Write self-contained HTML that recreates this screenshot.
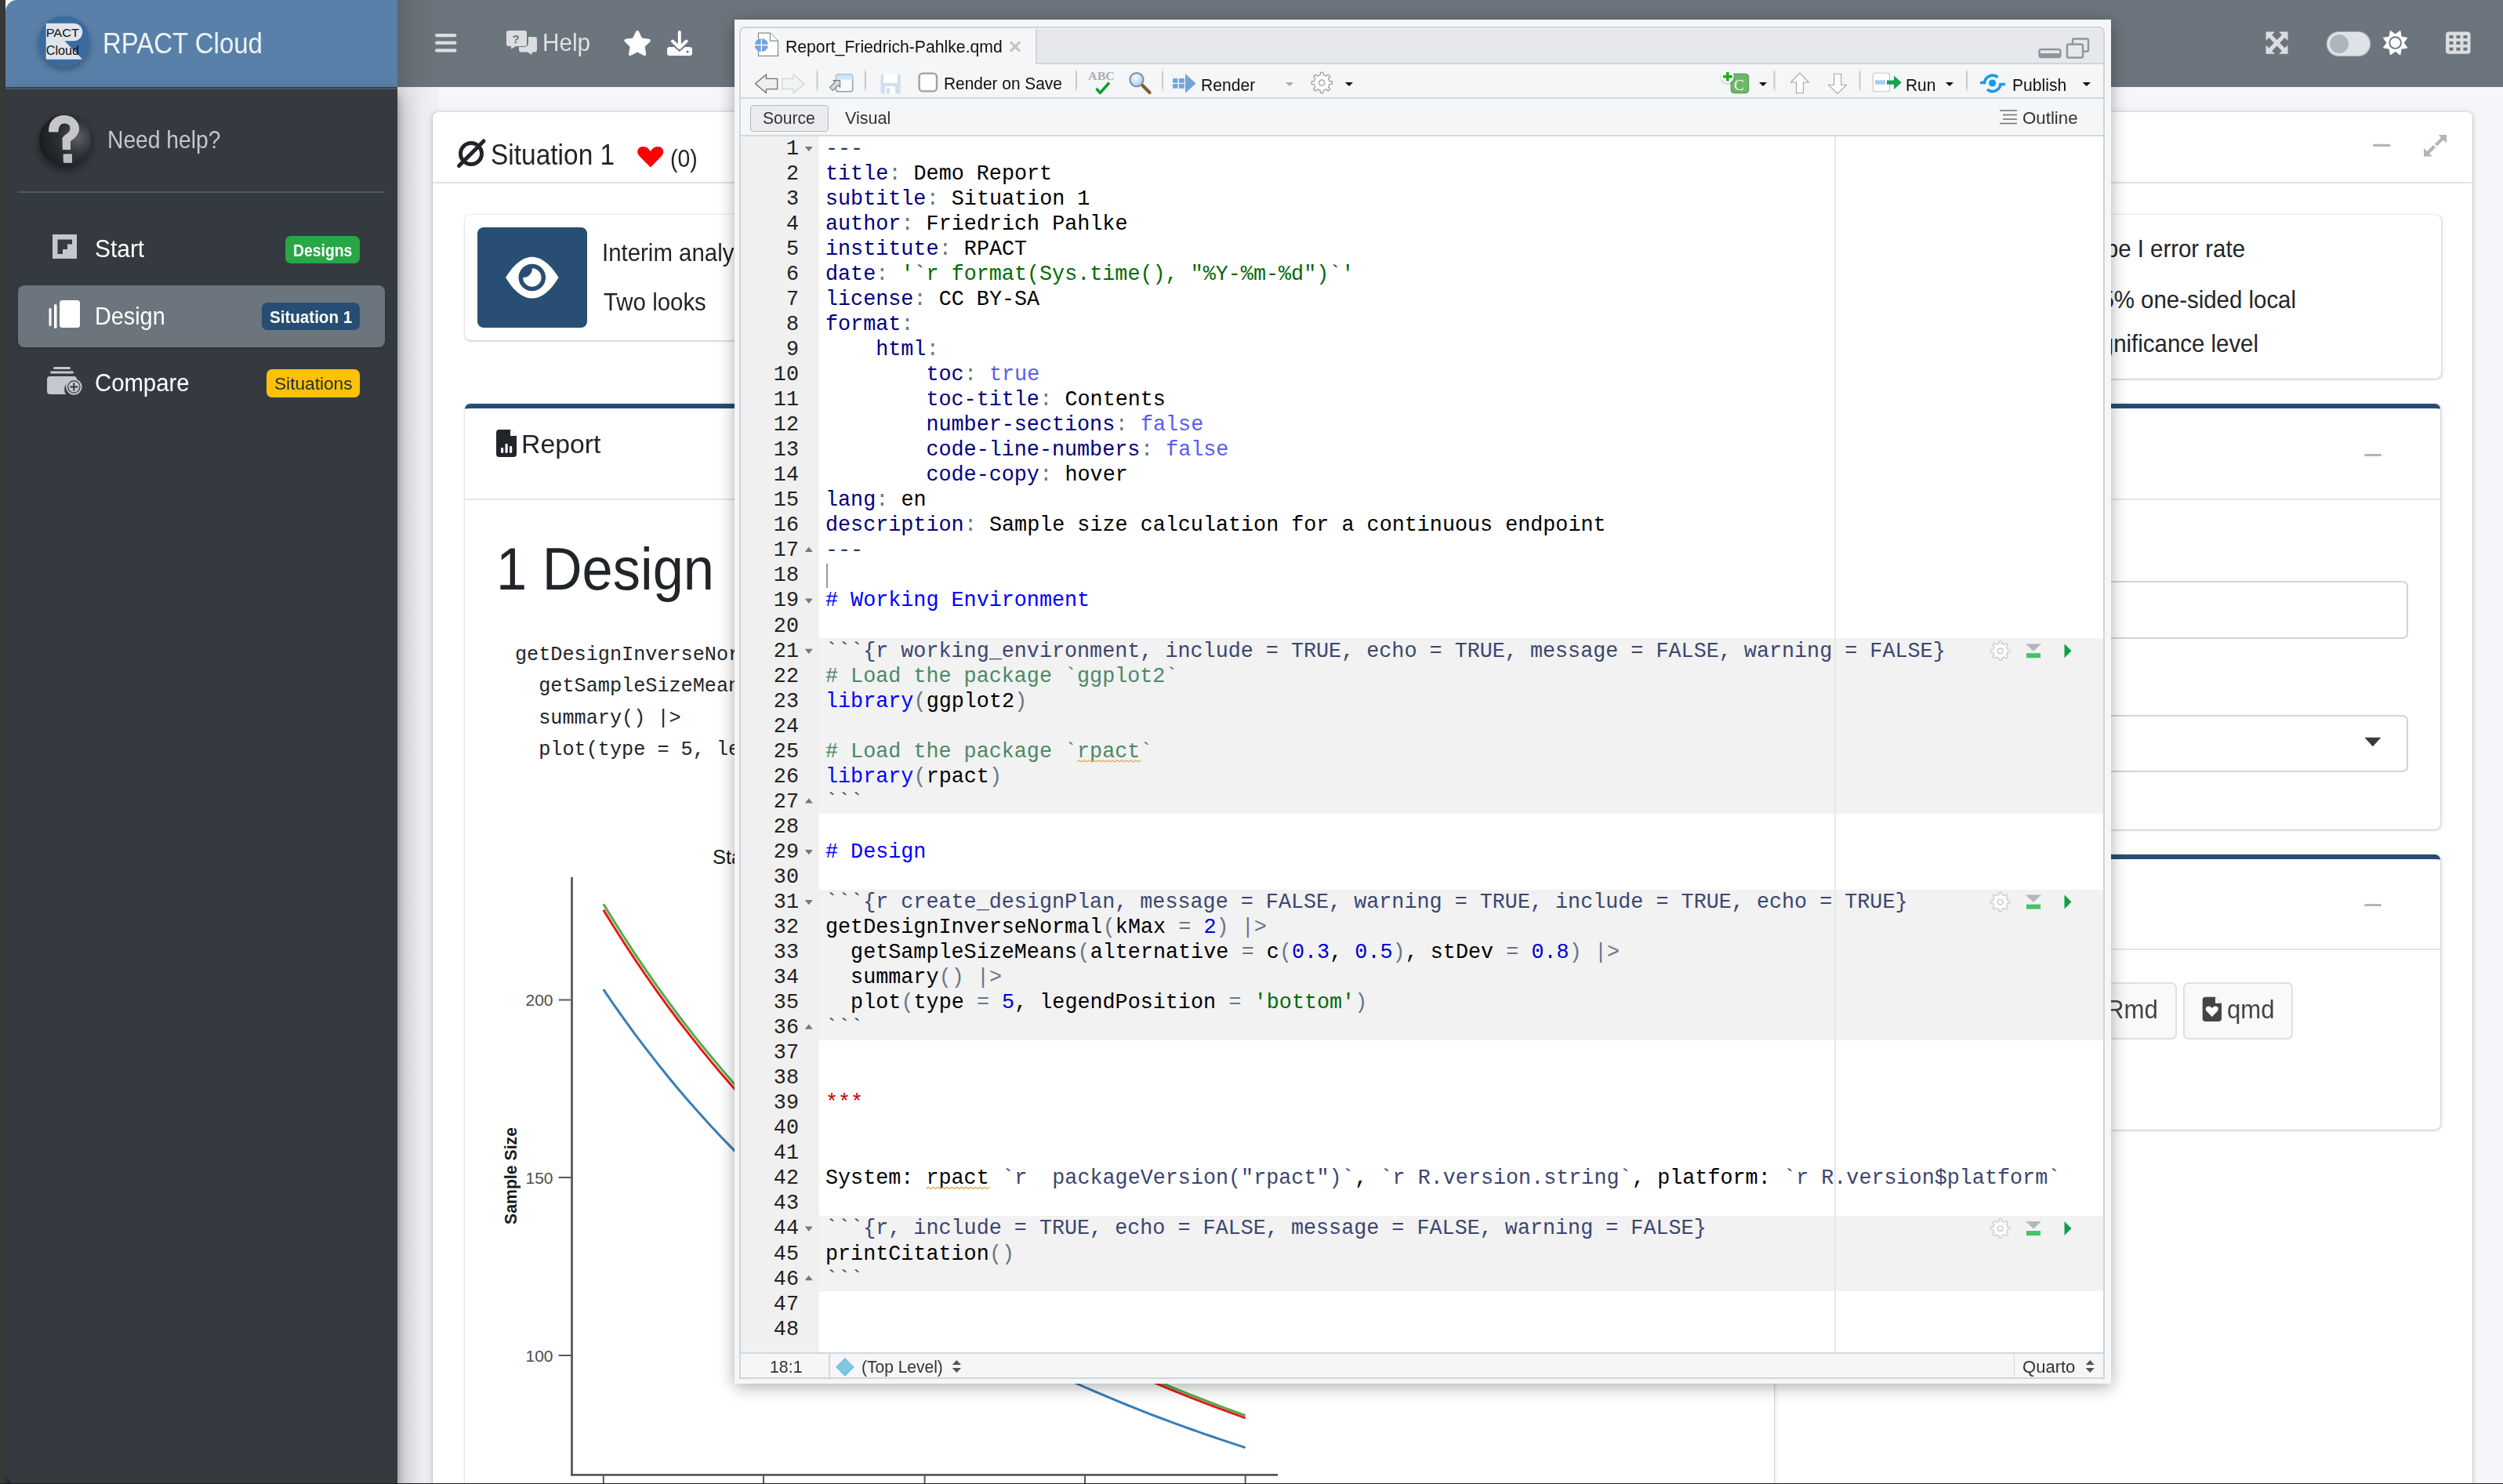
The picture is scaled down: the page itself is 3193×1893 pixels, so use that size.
<!DOCTYPE html><html><head><meta charset="utf-8"><style>
*{box-sizing:border-box;margin:0;padding:0}
html,body{width:3193px;height:1893px;overflow:hidden;background:#f4f6f9;font-family:"Liberation Sans",sans-serif}
.a{position:absolute}
.t{position:absolute;white-space:pre;line-height:1;transform-origin:0 0}
svg{position:absolute;overflow:visible}
</style></head><body>
<div class="a" style="left:0.00px;top:0.00px;width:7.00px;height:1893.00px;background:#383838;z-index:3;"></div>
<div class="a" style="left:0.00px;top:1850.00px;width:60.00px;height:43.00px;background:#383838;z-index:1;"></div>
<div class="a" style="left:7.00px;top:0.00px;width:500.00px;height:111.00px;background:#5880a8;border-top-left-radius:15px;"></div>
<div class="a" style="left:507.00px;top:0.00px;width:2686.00px;height:111.00px;background:#6c757d;"></div>
<div class="a" style="left:507.00px;top:111.00px;width:2686.00px;height:1782.00px;background:#f4f6f9;"></div>
<div class="a" style="left:7.00px;top:111.00px;width:500.00px;height:1782.00px;background:#343a40;border-bottom-left-radius:15px;box-shadow:0 14px 28px rgba(0,0,0,.25),0 10px 10px rgba(0,0,0,.22);z-index:2;"></div>
<div class="a" style="left:507.00px;top:111.00px;width:53.00px;height:1782.00px;background:linear-gradient(90deg,rgba(0,0,0,.13),rgba(0,0,0,.08) 30%,rgba(0,0,0,.035) 70%,rgba(0,0,0,.02));z-index:1;"></div>
<div class="a" style="left:507.00px;top:0.00px;width:53.00px;height:111.00px;background:linear-gradient(90deg,rgba(0,0,0,.13),rgba(0,0,0,.06) 35%,rgba(0,0,0,.0));z-index:1;"></div>
<div class="a" style="left:7.00px;top:111.50px;width:500.00px;height:2.00px;background:#4b545c;z-index:3;"></div>
<div class="a" style="left:0.00px;top:1892.00px;width:3193.00px;height:1.00px;background:#1e1e1e;z-index:30;"></div>
<svg style="left:0;top:0;z-index:3" width="520" height="111">
<defs><filter id="sh" x="-50%" y="-50%" width="200%" height="200%"><feDropShadow dx="0" dy="4" stdDeviation="5" flood-opacity=".35"/></filter></defs>
<circle cx="81.9" cy="52.8" r="32.6" fill="#3a6b9e" filter="url(#sh)"/>
<path d="M58.7 29.8 H94 a11.25 11.25 0 0 1 0 22.5 H82.5 L105.2 75.8 H58.7 Z" fill="#dfe5ed"/>
<text x="58.7" y="46.7" font-family="Liberation Sans" font-size="15.5" fill="#111" textLength="42.3" lengthAdjust="spacingAndGlyphs">PACT</text>
<text x="58.7" y="70.2" font-family="Liberation Sans" font-size="16.5" fill="#111" textLength="42.3" lengthAdjust="spacingAndGlyphs">Cloud</text>
</svg>
<span class="t" style="left:131.00px;top:37.27px;font-size:37.80px;color:rgba(255,255,255,.9);font-family:'Liberation Sans',sans-serif;transform:scaleX(0.8720);z-index:3;">RPACT Cloud</span>
<svg style="left:0;top:111px;z-index:3" width="520" height="420">
<defs><radialGradient id="chalk" cx="75%" cy="45%" r="75%"><stop offset="0" stop-color="#5b5f64"/><stop offset=".45" stop-color="#2e3135"/><stop offset="1" stop-color="#1b1d20"/></radialGradient>
<filter id="sh2" x="-50%" y="-50%" width="200%" height="200%"><feDropShadow dx="0" dy="5" stdDeviation="6" flood-opacity=".45"/></filter></defs>
<circle cx="82.8" cy="68" r="33.2" fill="url(#chalk)" filter="url(#sh2)"/>
<path d="M62.6 57 C62 44 70 36.5 82 36.5 C94 36.5 100.5 45 100.5 53 C100.5 61 95 65 89.5 69 L89.5 79.6 L80.2 79.6 L80 65 C82 61 90 59 90 53 C90 48 86 46 82 46 C77.5 46 74 50 74 57 Z" fill="#c6c6c6" stroke="#d8d8d8" stroke-width=".8"/>
<path d="M81 86 L91.3 85.8 L91.6 96.2 L81.4 96.3 Z" fill="#b9bcbd" stroke="#d8d8d8" stroke-width=".8"/>
<line x1="23" y1="134" x2="491" y2="134" stroke="#4f5962" stroke-width="2"/>
</svg>
<span class="t" style="left:136.50px;top:162.78px;font-size:31.20px;color:#c2c7d0;font-family:'Liberation Sans',sans-serif;transform:scaleX(0.9050);z-index:3;">Need help?</span>
<div class="a" style="left:23.00px;top:364.00px;width:468.00px;height:79.00px;background:#6c757d;border-radius:8px;box-shadow:0 1px 3px rgba(0,0,0,.2);z-index:3;"></div>
<span class="t" style="left:120.80px;top:302.25px;font-size:31.00px;color:#fff;font-family:'Liberation Sans',sans-serif;transform:scaleX(0.9650);z-index:4;">Start</span>
<span class="t" style="left:120.50px;top:387.85px;font-size:31.00px;color:#fff;font-family:'Liberation Sans',sans-serif;transform:scaleX(0.9290);z-index:4;">Design</span>
<span class="t" style="left:120.80px;top:472.95px;font-size:31.00px;color:#fff;font-family:'Liberation Sans',sans-serif;transform:scaleX(0.9450);z-index:4;">Compare</span>
<div class="a" style="left:364.00px;top:301.00px;width:95.00px;height:35.00px;background:#28a745;border-radius:7px;z-index:4;"></div>
<span class="t" style="left:373.50px;top:308.60px;font-size:22.00px;color:#fff;font-family:'Liberation Sans',sans-serif;font-weight:700;transform:scaleX(0.8800);z-index:5;">Designs</span>
<div class="a" style="left:334.00px;top:386.00px;width:125.00px;height:35.00px;background:#264d73;border-radius:7px;z-index:4;"></div>
<span class="t" style="left:344.00px;top:393.60px;font-size:22.00px;color:#fff;font-family:'Liberation Sans',sans-serif;font-weight:700;transform:scaleX(0.9350);z-index:5;">Situation 1</span>
<div class="a" style="left:340.00px;top:471.00px;width:119.00px;height:36.00px;background:#ffc107;border-radius:7px;z-index:4;"></div>
<span class="t" style="left:349.50px;top:479.30px;font-size:22.00px;color:#1f2d3d;font-family:'Liberation Sans',sans-serif;transform:scaleX(1.0300);z-index:5;">Situations</span>
<svg style="left:0;top:0;z-index:5" width="520" height="560">
<path d="M67 299 H98 V330 H67 Z M73.5 305.5 V324 H80 V318 H86 V311.5 H92 V305.5 Z" fill="#c2c7d0" fill-rule="evenodd"/>
<rect x="62.5" y="393" width="3" height="23" rx="1.5" fill="#fff"/>
<rect x="69" y="388" width="3.5" height="31" rx="1.7" fill="#fff"/>
<rect x="76" y="383" width="26" height="35" rx="3.5" fill="#fff"/>
<rect x="68" y="468" width="22" height="3" rx="1.5" fill="#c2c7d0"/>
<rect x="64" y="473.5" width="30" height="3" rx="1.5" fill="#c2c7d0"/>
<path d="M60 484 a4 4 0 0 1 4 -4 H94 a4 4 0 0 1 4 4 V487 A11 11 0 0 0 84 503 H64 a4 4 0 0 1 -4 -4 Z" fill="#c2c7d0"/>
<circle cx="94.3" cy="493.5" r="10.3" fill="#c2c7d0"/>
<circle cx="94.3" cy="493.5" r="8.3" fill="#343a40"/>
<circle cx="94.3" cy="493.5" r="7" fill="#c2c7d0"/>
<path d="M94.3 488.5 V498.5 M89.3 493.5 H99.3" stroke="#343a40" stroke-width="2"/>
</svg>
<svg style="left:0;top:0;z-index:3" width="3193" height="111">
<rect x="555" y="43" width="27.5" height="4.2" rx="2.1" fill="#dcdde0"/>
<rect x="555" y="52.6" width="27.5" height="4.2" rx="2.1" fill="#dcdde0"/>
<rect x="555" y="62.3" width="27.5" height="4.2" rx="2.1" fill="#dcdde0"/>
<path d="M649 39 H669 a3 3 0 0 1 3 3 V56 a3 3 0 0 1 -3 3 H658 L652 62.5 V59 H649 a3 3 0 0 1 -3 -3 V42 a3 3 0 0 1 3 -3 Z" fill="#dcdde0"/>
<path d="M674 47 H682 a3 3 0 0 1 3 3 V63.5 a3 3 0 0 1 -3 3 H678.5 V70 L673 66.5 H665 a3 3 0 0 1 -3 -3 V60 H669 a5 5 0 0 0 5 -5 Z" fill="#dcdde0"/>
<text x="653.5" y="55" font-family="Liberation Sans" font-weight="700" font-size="15" fill="#6c757d">?</text>
<path transform="translate(795.1,39) scale(0.0625)" d="M259.3 17.8L194 150.2 47.9 171.5c-26.2 3.8-36.7 36.1-17.7 54.6l105.7 103-25 145.5c-4.5 26.3 23.2 46 46.4 33.7L288 439.6l130.7 68.7c23.2 12.2 50.9-7.4 46.4-33.7l-25-145.5 105.7-103c19-18.5 8.5-50.8-17.7-54.6L382 150.2 316.7 17.8c-11.7-23.6-45.6-23.9-57.4 0z" fill="#fff"/>
<path d="M866.8 41 V60" stroke="#fff" stroke-width="4" stroke-linecap="round"/>
<path d="M858 52.5 L866.8 61 L875.6 52.5" stroke="#fff" stroke-width="4" fill="none" stroke-linecap="round" stroke-linejoin="round"/>
<path d="M851 63 a3 3 0 0 1 3 -3 H860 L866.8 66 L873.6 60 H880 a3 3 0 0 1 3 3 V68 a3 3 0 0 1 -3 3 H854 a3 3 0 0 1 -3 -3 Z" fill="#fff"/>
<circle cx="877" cy="66" r="1.6" fill="#6c757d"/>
<path d="M2890.6 40.6 H2902 L2898.2 44.6 L2904.6 51 L2911 44.6 L2907.1 40.6 H2918.5 V52 L2914.6 48.1 L2908.2 54.7 L2914.6 61.2 L2918.5 57.4 V68.8 H2907.1 L2911 65 L2904.6 58.4 L2898.2 65 L2902 68.8 H2890.6 V57.4 L2894.5 61.2 L2900.9 54.7 L2894.5 48.1 L2890.6 52 Z" fill="#dcdde0"/>
<rect x="2968.2" y="40.5" width="55.5" height="31" rx="15.5" fill="#dfe2e6" stroke="#a9b1b9" stroke-width="1.2"/>
<circle cx="2984" cy="56" r="12" fill="#adb5bd"/>
<polygon points="3055.60,43.80 3061.95,39.26 3063.24,46.96 3070.94,48.25 3066.40,54.60 3070.94,60.95 3063.24,62.24 3061.95,69.94 3055.60,65.40 3049.25,69.94 3047.96,62.24 3040.26,60.95 3044.80,54.60 3040.26,48.25 3047.96,46.96 3049.25,39.26" fill="#fff" stroke="#fff" stroke-width="0.8" stroke-linejoin="round"/>
<circle cx="3055.6" cy="54.6" r="7.3" fill="#fff" stroke="#6c757d" stroke-width="1.9"/>
<rect x="3120" y="40.6" width="31.5" height="28.2" rx="4" fill="#dcdde0"/>
<g fill="#6c757d">
<rect x="3124.5" y="45" width="5" height="4"/><rect x="3133.5" y="45" width="5" height="4"/><rect x="3142.5" y="45" width="5" height="4"/>
<rect x="3124.5" y="52.8" width="5" height="4"/><rect x="3133.5" y="52.8" width="5" height="4"/><rect x="3142.5" y="52.8" width="5" height="4"/>
<rect x="3124.5" y="60.6" width="5" height="4"/><rect x="3133.5" y="60.6" width="5" height="4"/><rect x="3142.5" y="60.6" width="5" height="4"/>
</g>
</svg>
<span class="t" style="left:692.30px;top:39.39px;font-size:31.30px;color:#dfe0e2;font-family:'Liberation Sans',sans-serif;transform:scaleX(0.9500);z-index:3;">Help</span>
<div class="a" style="left:552px;top:143px;width:2602px;height:1800px;background:#fff;border-radius:7px;box-shadow:0 0 1px rgba(0,0,0,.2),0 1px 3px rgba(0,0,0,.2),0 0 8px rgba(0,0,0,.14);z-index:1"></div>
<div class="a" style="left:552.00px;top:232.00px;width:2602.00px;height:2.00px;background:#dee2e6;z-index:1;"></div>
<span class="t" style="left:626.00px;top:179.73px;font-size:36.20px;color:#212529;font-family:'Liberation Sans',sans-serif;transform:scaleX(0.9250);z-index:3;">Situation 1</span>
<span class="t" style="left:854.50px;top:186.57px;font-size:30.50px;color:#212529;font-family:'Liberation Sans',sans-serif;transform:scaleX(0.9300);z-index:3;">(0)</span>
<svg style="left:0;top:0;z-index:3" width="3193" height="300">
<circle cx="601" cy="196" r="13.5" fill="none" stroke="#212529" stroke-width="5"/>
<path d="M585.5 211.5 L617 180" stroke="#212529" stroke-width="5" stroke-linecap="round"/>
<path d="M829.8 213.6 L816 199.6 C811 194.5 813 187 820.5 187 C825 187 828 190 829.8 193 C831.6 190 834.6 187 839 187 C846.5 187 848.6 194.5 843.6 199.6 Z" fill="#f00"/>
<rect x="3027" y="183.7" width="22.5" height="3.4" rx="1.7" fill="#adb5bd"/>
<path d="M3092 199.5 V189 L3096 193 L3104 185 L3107 188 L3099 196 L3103 199.5 Z M3121 172 V182.5 L3117 178.5 L3109 186.5 L3106 183.5 L3114 175.5 L3110.5 172 Z" fill="#adb5bd"/>
</svg>
<div class="a" style="left:593px;top:274px;width:1245px;height:160px;background:#fff;border-radius:7px;box-shadow:0 0 1px rgba(0,0,0,.2),0 1px 3px rgba(0,0,0,.2),3px 0 5px rgba(0,0,0,.07);z-index:2"></div>
<div class="a" style="left:609.00px;top:290.00px;width:140.00px;height:128.00px;background:#294e73;border-radius:8px;z-index:3;"></div>
<svg style="left:0;top:0;z-index:4" width="1000" height="500">
<path d="M645 354 C658 333 670 327.7 678.8 327.7 C687.6 327.7 699.6 333 712.6 354 C699.6 375.5 687.6 380.5 678.8 380.5 C670 380.5 658 375.5 645 354 Z" fill="#fff"/>
<circle cx="678.8" cy="354" r="14.5" fill="none" stroke="#294e73" stroke-width="5.5"/>
<path d="M665 354 A13.8 13.8 0 0 1 678.8 340.2 V342.2 A11.2 11.2 0 0 1 667.0 354 Z" fill="#294e73"/>
</svg>
<span class="t" style="left:768.00px;top:306.59px;font-size:31.30px;color:#212529;font-family:'Liberation Sans',sans-serif;transform:scaleX(0.9400);z-index:3;">Interim analysis</span>
<span class="t" style="left:769.50px;top:370.09px;font-size:31.30px;color:#212529;font-family:'Liberation Sans',sans-serif;transform:scaleX(0.9400);z-index:3;">Two looks</span>
<div class="a" style="left:1868px;top:274px;width:1245.5px;height:209px;background:#fff;border-radius:7px;box-shadow:0 0 1px rgba(0,0,0,.2),0 1px 3px rgba(0,0,0,.2),3px 0 5px rgba(0,0,0,.07);z-index:2"></div>
<span class="t" style="left:2864.00px;top:302.00px;font-size:31.30px;color:#212529;font-family:'Liberation Sans',sans-serif;transform:scaleX(0.9400);z-index:3;transform-origin:100% 0;translate:-100% 0;">Type I error rate</span>
<span class="t" style="left:2929.00px;top:367.09px;font-size:31.30px;color:#212529;font-family:'Liberation Sans',sans-serif;transform:scaleX(0.9400);z-index:3;transform-origin:100% 0;translate:-100% 0;">2.5% one-sided local</span>
<span class="t" style="left:2881.00px;top:423.39px;font-size:31.30px;color:#212529;font-family:'Liberation Sans',sans-serif;transform:scaleX(0.9400);z-index:3;transform-origin:100% 0;translate:-100% 0;">significance level</span>
<div class="a" style="left:593px;top:515px;width:1670px;height:1500px;background:#fff;border-radius:7px;border-top:6px solid #264d75;box-shadow:0 0 1px rgba(0,0,0,.2),0 1px 3px rgba(0,0,0,.2),3px 0 5px rgba(0,0,0,.07);z-index:2"></div>
<div class="a" style="left:593.00px;top:636.00px;width:1670.00px;height:2.00px;background:#e2e5e8;z-index:3;"></div>
<span class="t" style="left:664.50px;top:549.70px;font-size:33.30px;color:#212529;font-family:'Liberation Sans',sans-serif;transform:scaleX(1.0150);z-index:3;">Report</span>
<svg style="left:0;top:0;z-index:4" width="1000" height="700">
<path d="M636 548 H651 L659 556 V579 a4 4 0 0 1 -4 4 H637 a4 4 0 0 1 -4 -4 V552 a4 4 0 0 1 4 -4 Z" fill="#212529"/>
<path d="M651 548 V556 H659 Z" fill="#fff"/>
<rect x="639" y="571" width="3.2" height="7" rx="1.4" fill="#fff"/>
<rect x="644.5" y="566" width="3.2" height="12" rx="1.4" fill="#fff"/>
<rect x="650" y="569" width="3.2" height="9" rx="1.4" fill="#fff"/>
</svg>
<span class="t" style="left:632.50px;top:688.53px;font-size:75.50px;color:#212529;font-family:'Liberation Sans',sans-serif;transform:scaleX(0.9330);z-index:3;">1 Design</span>
<span class="t" style="left:657.00px;top:822.85px;font-size:25.20px;color:#212529;font-family:'Liberation Mono',monospace;z-index:3;">getDesignInverseNormal(kMax = 2) |&gt;</span>
<span class="t" style="left:657.00px;top:863.25px;font-size:25.20px;color:#212529;font-family:'Liberation Mono',monospace;z-index:3;">  getSampleSizeMeans(alternative = c(0.3, 0.5), stDev = 0.8) |&gt;</span>
<span class="t" style="left:657.00px;top:903.65px;font-size:25.20px;color:#212529;font-family:'Liberation Mono',monospace;z-index:3;">  summary() |&gt;</span>
<span class="t" style="left:657.00px;top:944.05px;font-size:25.20px;color:#212529;font-family:'Liberation Mono',monospace;z-index:3;">  plot(type = 5, legendPosition = &#x27;bottom&#x27;)</span>
<svg style="left:0;top:0;z-index:3" width="2300" height="1893">
<line x1="729.5" y1="1119" x2="729.5" y2="1882.5" stroke="#595959" stroke-width="2.8"/>
<line x1="728.1" y1="1881.3" x2="1630" y2="1881.3" stroke="#595959" stroke-width="2.8"/>
<g stroke="#595959" stroke-width="2">
<line x1="712.6" y1="1275.5" x2="729.5" y2="1275.5"/>
<line x1="712.6" y1="1502" x2="729.5" y2="1502"/>
<line x1="712.6" y1="1729" x2="729.5" y2="1729"/>
<line x1="769.8" y1="1881" x2="769.8" y2="1893"/>
<line x1="974" y1="1881" x2="974" y2="1893"/>
<line x1="1179.6" y1="1881" x2="1179.6" y2="1893"/>
<line x1="1384" y1="1881" x2="1384" y2="1893"/>
<line x1="1588.7" y1="1881" x2="1588.7" y2="1893"/>
</g>
<g font-family="Liberation Sans" font-size="21" fill="#4d4d4d" text-anchor="end">
<text x="705.5" y="1283">200</text><text x="705.5" y="1509.5">150</text><text x="705.5" y="1736.5">100</text>
</g>
<text transform="translate(659,1500) rotate(-90)" font-family="Liberation Sans" font-weight="700" font-size="22" fill="#1a1a1a" text-anchor="middle" textLength="124" lengthAdjust="spacingAndGlyphs">Sample Size</text>
<text x="909" y="1102" font-family="Liberation Sans" font-size="25.5" fill="#1a1a1a">Stage levels</text>

<polyline points="769.8,1153.2 783.4,1175.4 797.1,1197.0 810.7,1217.9 824.4,1238.1 838.0,1257.6 851.7,1276.6 865.3,1295.0 879.0,1312.8 892.6,1330.1 906.3,1346.8 919.9,1363.1 933.6,1378.9 947.2,1394.2 960.9,1409.1 974.5,1423.6 988.2,1437.7 1001.8,1451.4 1015.5,1464.6 1029.1,1477.6 1042.8,1490.2 1056.4,1502.4 1070.1,1514.3 1083.7,1525.9 1097.4,1537.2 1111.0,1548.2 1124.7,1558.9 1138.3,1569.4 1152.0,1579.6 1165.6,1589.5 1179.2,1599.2 1192.9,1608.6 1206.5,1617.8 1220.2,1626.8 1233.8,1635.6 1247.5,1644.1 1261.1,1652.5 1274.8,1660.6 1288.4,1668.6 1302.1,1676.4 1315.7,1684.0 1329.4,1691.4 1343.0,1698.7 1356.7,1705.8 1370.3,1712.7 1384.0,1719.5 1397.6,1726.1 1411.3,1732.6 1424.9,1739.0 1438.6,1745.2 1452.2,1751.3 1465.9,1757.2 1479.5,1763.1 1493.2,1768.8 1506.8,1774.4 1520.5,1779.8 1534.1,1785.2 1547.8,1790.5 1561.4,1795.6 1575.1,1800.6 1588.7,1805.6" fill="none" stroke="#4daf4a" stroke-width="3"/>
<polyline points="769.8,1160.6 783.4,1182.8 797.1,1204.2 810.7,1224.9 824.4,1245.0 838.0,1264.4 851.7,1283.3 865.3,1301.5 879.0,1319.2 892.6,1336.4 906.3,1353.1 919.9,1369.2 933.6,1384.9 947.2,1400.2 960.9,1415.0 974.5,1429.3 988.2,1443.3 1001.8,1456.9 1015.5,1470.1 1029.1,1482.9 1042.8,1495.4 1056.4,1507.6 1070.1,1519.4 1083.7,1531.0 1097.4,1542.2 1111.0,1553.1 1124.7,1563.8 1138.3,1574.2 1152.0,1584.3 1165.6,1594.1 1179.2,1603.7 1192.9,1613.1 1206.5,1622.3 1220.2,1631.2 1233.8,1639.9 1247.5,1648.4 1261.1,1656.7 1274.8,1664.8 1288.4,1672.7 1302.1,1680.5 1315.7,1688.0 1329.4,1695.4 1343.0,1702.6 1356.7,1709.7 1370.3,1716.6 1384.0,1723.3 1397.6,1729.9 1411.3,1736.4 1424.9,1742.7 1438.6,1748.9 1452.2,1754.9 1465.9,1760.8 1479.5,1766.6 1493.2,1772.3 1506.8,1777.8 1520.5,1783.3 1534.1,1788.6 1547.8,1793.8 1561.4,1798.9 1575.1,1803.9 1588.7,1808.9" fill="none" stroke="#e41a1c" stroke-width="3"/>
<polyline points="769.8,1262.2 783.4,1282.1 797.1,1301.4 810.7,1320.1 824.4,1338.2 838.0,1355.7 851.7,1372.7 865.3,1389.2 879.0,1405.2 892.6,1420.6 906.3,1435.7 919.9,1450.2 933.6,1464.4 947.2,1478.1 960.9,1491.5 974.5,1504.4 988.2,1517.0 1001.8,1529.3 1015.5,1541.2 1029.1,1552.8 1042.8,1564.0 1056.4,1575.0 1070.1,1585.7 1083.7,1596.0 1097.4,1606.2 1111.0,1616.0 1124.7,1625.6 1138.3,1635.0 1152.0,1644.1 1165.6,1653.0 1179.2,1661.7 1192.9,1670.1 1206.5,1678.4 1220.2,1686.4 1233.8,1694.3 1247.5,1701.9 1261.1,1709.4 1274.8,1716.7 1288.4,1723.9 1302.1,1730.8 1315.7,1737.6 1329.4,1744.3 1343.0,1750.8 1356.7,1757.2 1370.3,1763.4 1384.0,1769.5 1397.6,1775.4 1411.3,1781.2 1424.9,1786.9 1438.6,1792.5 1452.2,1797.9 1465.9,1803.3 1479.5,1808.5 1493.2,1813.6 1506.8,1818.6 1520.5,1823.5 1534.1,1828.3 1547.8,1833.0 1561.4,1837.6 1575.1,1842.1 1588.7,1846.6" fill="none" stroke="#377eb8" stroke-width="3"/>
</svg>
<div class="a" style="left:2293px;top:515px;width:820px;height:543px;background:#fff;border-radius:7px;border-top:6px solid #264d75;box-shadow:0 0 1px rgba(0,0,0,.2),0 1px 3px rgba(0,0,0,.2),3px 0 5px rgba(0,0,0,.07);z-index:2"></div>
<div class="a" style="left:2293.00px;top:636.00px;width:820.00px;height:2.00px;background:#e2e5e8;z-index:3;"></div>
<div class="a" style="left:3015.70px;top:579.00px;width:22.30px;height:3.40px;background:#adb5bd;border-radius:2px;z-index:3;"></div>
<div class="a" style="left:2330.00px;top:741.00px;width:742.40px;height:74.30px;border:2px solid #ced4da;border-radius:7px;z-index:3;"></div>
<div class="a" style="left:2330.00px;top:911.70px;width:742.40px;height:73.60px;border:2px solid #ced4da;border-radius:7px;z-index:3;"></div>
<svg style="left:0;top:0;z-index:4" width="3193" height="1000">
<path d="M3016.4 940.8 H3037.4 L3026.9 952.3 Z" fill="#343a40"/>
</svg>
<div class="a" style="left:2293px;top:1090px;width:820px;height:351px;background:#fff;border-radius:7px;border-top:6px solid #264d75;box-shadow:0 0 1px rgba(0,0,0,.2),0 1px 3px rgba(0,0,0,.2),3px 0 5px rgba(0,0,0,.07);z-index:2"></div>
<div class="a" style="left:2293.00px;top:1210.00px;width:820.00px;height:2.00px;background:#e2e5e8;z-index:3;"></div>
<div class="a" style="left:3016.00px;top:1153.00px;width:21.70px;height:3.40px;background:#adb5bd;border-radius:2px;z-index:3;"></div>
<div class="a" style="left:2640.00px;top:1252.60px;width:137.00px;height:73.40px;background:#f8f9fa;border:2px solid #dddfe2;border-radius:7px;z-index:3;"></div>
<div class="a" style="left:2785.00px;top:1252.60px;width:140.00px;height:73.40px;background:#f8f9fa;border:2px solid #dddfe2;border-radius:7px;z-index:3;"></div>
<span class="t" style="left:2687.00px;top:1271.33px;font-size:33.50px;color:#444;font-family:'Liberation Sans',sans-serif;transform:scaleX(0.9300);z-index:4;">Rmd</span>
<span class="t" style="left:2841.00px;top:1271.33px;font-size:33.50px;color:#444;font-family:'Liberation Sans',sans-serif;transform:scaleX(0.9300);z-index:4;">qmd</span>
<svg style="left:0;top:0;z-index:4" width="3193" height="1400">
<path d="M2813 1271.8 H2826 L2834 1279.8 V1299 a4 4 0 0 1 -4 4 H2813.7 a4 4 0 0 1 -4 -4 V1275.8 a4 4 0 0 1 4 -4 Z" fill="#444"/>
<path d="M2826 1271.8 V1279.8 H2834 Z" fill="#fff"/>
<path d="M2821.8 1297 L2815 1290 C2812.5 1287.3 2814 1283.5 2817.6 1283.5 C2819.6 1283.5 2821 1285 2821.8 1286.2 C2822.6 1285 2824 1283.5 2826 1283.5 C2829.6 1283.5 2831 1287.3 2828.6 1290 Z" fill="#fff"/>
</svg>
<div class="a" style="left:937.00px;top:25.00px;width:1756.00px;height:1740.00px;background:#f4f6f7;box-shadow:0 4px 20px rgba(0,0,0,.33);z-index:10;"></div>
<div class="a" style="left:943.30px;top:34.30px;width:1741.40px;height:1724.70px;border:2.2px solid #d0d5d9;border-radius:7px 7px 0 0;z-index:10;"></div>
<div class="a" style="left:1321.00px;top:36.50px;width:1361.50px;height:45.50px;background:#e6e8eb;border-left:2px solid #d0d5d9;border-bottom:2px solid #d0d5d9;border-top-right-radius:6px;z-index:10;"></div>
<div class="a" style="left:945.00px;top:123.80px;width:1738.00px;height:2.20px;background:#d3d8dc;z-index:10;"></div>
<div class="a" style="left:945.00px;top:171.60px;width:1738.00px;height:2.00px;background:#d3d8dc;z-index:10;"></div>
<div class="a" style="left:957.00px;top:134.00px;width:100.00px;height:34.00px;background:#e9ebee;border:1.6px solid #b4babf;border-radius:4px;z-index:10;"></div>
<div class="a" style="left:945.00px;top:173.60px;width:1738.00px;height:1552.00px;background:#fff;z-index:10;"></div>
<div class="a" style="left:945.00px;top:173.60px;width:100.00px;height:1552.00px;background:#f0f0f0;z-index:10;"></div>
<div class="a" style="left:2340.00px;top:173.60px;width:2.00px;height:1552.00px;background:#e8e8e8;z-index:11;"></div>
<div class="a" style="left:945.00px;top:1724.60px;width:1738.00px;height:2.00px;background:#d3d8dc;z-index:10;"></div>
<div class="a" style="left:1057.00px;top:1726.60px;width:1.60px;height:31.40px;background:#d3d8dc;z-index:10;"></div>
<div class="a" style="left:2568.50px;top:1726.60px;width:1.50px;height:31.40px;background:#d3d8dc;z-index:10;"></div>
<span class="t" style="left:1002.00px;top:49.13px;font-size:22.20px;color:#111;font-family:'Liberation Sans',sans-serif;transform:scaleX(0.9550);z-index:12;">Report_Friedrich-Pahlke.qmd</span>
<span class="t" style="left:1204.00px;top:96.22px;font-size:22.10px;color:#111;font-family:'Liberation Sans',sans-serif;transform:scaleX(0.9450);z-index:12;">Render on Save</span>
<span class="t" style="left:1532.00px;top:98.22px;font-size:22.10px;color:#111;font-family:'Liberation Sans',sans-serif;transform:scaleX(0.9550);z-index:12;">Render</span>
<span class="t" style="left:2431.00px;top:98.22px;font-size:22.10px;color:#111;font-family:'Liberation Sans',sans-serif;transform:scaleX(0.9450);z-index:12;">Run</span>
<span class="t" style="left:2567.00px;top:98.22px;font-size:22.10px;color:#111;font-family:'Liberation Sans',sans-serif;transform:scaleX(0.9550);z-index:12;">Publish</span>
<span class="t" style="left:973.00px;top:140.22px;font-size:22.10px;color:#333;font-family:'Liberation Sans',sans-serif;transform:scaleX(0.9550);z-index:12;">Source</span>
<span class="t" style="left:1077.60px;top:140.22px;font-size:22.10px;color:#333;font-family:'Liberation Sans',sans-serif;transform:scaleX(0.9760);z-index:12;">Visual</span>
<span class="t" style="left:2579.50px;top:139.81px;font-size:22.10px;color:#333;font-family:'Liberation Sans',sans-serif;transform:scaleX(1.0080);z-index:12;">Outline</span>
<span class="t" style="left:981.50px;top:1733.21px;font-size:22.10px;color:#333;font-family:'Liberation Sans',sans-serif;transform:scaleX(0.9650);z-index:12;">18:1</span>
<span class="t" style="left:1098.80px;top:1733.21px;font-size:22.10px;color:#333;font-family:'Liberation Sans',sans-serif;transform:scaleX(0.9500);z-index:12;">(Top Level)</span>
<span class="t" style="left:2580.00px;top:1733.21px;font-size:22.10px;color:#333;font-family:'Liberation Sans',sans-serif;transform:scaleX(0.9970);z-index:12;">Quarto</span>
<div class="a" style="left:1045.00px;top:814.20px;width:1638.00px;height:224.28px;background:#f2f2f2;z-index:10;"></div>
<div class="a" style="left:1045.00px;top:1134.60px;width:1638.00px;height:192.24px;background:#f2f2f2;z-index:10;"></div>
<div class="a" style="left:1045.00px;top:1551.12px;width:1638.00px;height:96.12px;background:#f2f2f2;z-index:10;"></div>
<div class="a" style="left:0;top:0;z-index:12">
<span class="t" style="left:1002.92px;top:176.77px;font-size:26.75px;color:#222;font-family:'Liberation Mono',monospace;">1</span>
<span class="t" style="left:1053.00px;top:176.77px;font-size:26.75px;color:#27365e;font-family:'Liberation Mono',monospace;">---</span>
<span class="t" style="left:1002.92px;top:208.81px;font-size:26.75px;color:#222;font-family:'Liberation Mono',monospace;">2</span>
<span class="t" style="left:1053.00px;top:208.81px;font-size:26.75px;color:#000080;font-family:'Liberation Mono',monospace;">title</span>
<span class="t" style="left:1133.40px;top:208.81px;font-size:26.75px;color:#687687;font-family:'Liberation Mono',monospace;">:</span>
<span class="t" style="left:1149.48px;top:208.81px;font-size:26.75px;color:#000;font-family:'Liberation Mono',monospace;"> Demo Report</span>
<span class="t" style="left:1002.92px;top:240.85px;font-size:26.75px;color:#222;font-family:'Liberation Mono',monospace;">3</span>
<span class="t" style="left:1053.00px;top:240.85px;font-size:26.75px;color:#000080;font-family:'Liberation Mono',monospace;">subtitle</span>
<span class="t" style="left:1181.64px;top:240.85px;font-size:26.75px;color:#687687;font-family:'Liberation Mono',monospace;">:</span>
<span class="t" style="left:1197.72px;top:240.85px;font-size:26.75px;color:#000;font-family:'Liberation Mono',monospace;"> Situation 1</span>
<span class="t" style="left:1002.92px;top:272.89px;font-size:26.75px;color:#222;font-family:'Liberation Mono',monospace;">4</span>
<span class="t" style="left:1053.00px;top:272.89px;font-size:26.75px;color:#000080;font-family:'Liberation Mono',monospace;">author</span>
<span class="t" style="left:1149.48px;top:272.89px;font-size:26.75px;color:#687687;font-family:'Liberation Mono',monospace;">:</span>
<span class="t" style="left:1165.56px;top:272.89px;font-size:26.75px;color:#000;font-family:'Liberation Mono',monospace;"> Friedrich Pahlke</span>
<span class="t" style="left:1002.92px;top:304.93px;font-size:26.75px;color:#222;font-family:'Liberation Mono',monospace;">5</span>
<span class="t" style="left:1053.00px;top:304.93px;font-size:26.75px;color:#000080;font-family:'Liberation Mono',monospace;">institute</span>
<span class="t" style="left:1197.72px;top:304.93px;font-size:26.75px;color:#687687;font-family:'Liberation Mono',monospace;">:</span>
<span class="t" style="left:1213.80px;top:304.93px;font-size:26.75px;color:#000;font-family:'Liberation Mono',monospace;"> RPACT</span>
<span class="t" style="left:1002.92px;top:336.97px;font-size:26.75px;color:#222;font-family:'Liberation Mono',monospace;">6</span>
<span class="t" style="left:1053.00px;top:336.97px;font-size:26.75px;color:#000080;font-family:'Liberation Mono',monospace;">date</span>
<span class="t" style="left:1117.32px;top:336.97px;font-size:26.75px;color:#687687;font-family:'Liberation Mono',monospace;">:</span>
<span class="t" style="left:1133.40px;top:336.97px;font-size:26.75px;color:#036a07;font-family:'Liberation Mono',monospace;"> &#x27;`r format(Sys.time(), &quot;%Y-%m-%d&quot;)`&#x27;</span>
<span class="t" style="left:1002.92px;top:369.01px;font-size:26.75px;color:#222;font-family:'Liberation Mono',monospace;">7</span>
<span class="t" style="left:1053.00px;top:369.01px;font-size:26.75px;color:#000080;font-family:'Liberation Mono',monospace;">license</span>
<span class="t" style="left:1165.56px;top:369.01px;font-size:26.75px;color:#687687;font-family:'Liberation Mono',monospace;">:</span>
<span class="t" style="left:1181.64px;top:369.01px;font-size:26.75px;color:#000;font-family:'Liberation Mono',monospace;"> CC BY-SA</span>
<span class="t" style="left:1002.92px;top:401.05px;font-size:26.75px;color:#222;font-family:'Liberation Mono',monospace;">8</span>
<span class="t" style="left:1053.00px;top:401.05px;font-size:26.75px;color:#000080;font-family:'Liberation Mono',monospace;">format</span>
<span class="t" style="left:1149.48px;top:401.05px;font-size:26.75px;color:#687687;font-family:'Liberation Mono',monospace;">:</span>
<span class="t" style="left:1002.92px;top:433.09px;font-size:26.75px;color:#222;font-family:'Liberation Mono',monospace;">9</span>
<span class="t" style="left:1053.00px;top:433.09px;font-size:26.75px;color:#000080;font-family:'Liberation Mono',monospace;">    html</span>
<span class="t" style="left:1181.64px;top:433.09px;font-size:26.75px;color:#687687;font-family:'Liberation Mono',monospace;">:</span>
<span class="t" style="left:986.84px;top:465.13px;font-size:26.75px;color:#222;font-family:'Liberation Mono',monospace;">10</span>
<span class="t" style="left:1053.00px;top:465.13px;font-size:26.75px;color:#000080;font-family:'Liberation Mono',monospace;">        toc</span>
<span class="t" style="left:1229.88px;top:465.13px;font-size:26.75px;color:#687687;font-family:'Liberation Mono',monospace;">:</span>
<span class="t" style="left:1245.96px;top:465.13px;font-size:26.75px;color:#585cf6;font-family:'Liberation Mono',monospace;"> true</span>
<span class="t" style="left:986.84px;top:497.17px;font-size:26.75px;color:#222;font-family:'Liberation Mono',monospace;">11</span>
<span class="t" style="left:1053.00px;top:497.17px;font-size:26.75px;color:#000080;font-family:'Liberation Mono',monospace;">        toc-title</span>
<span class="t" style="left:1326.36px;top:497.17px;font-size:26.75px;color:#687687;font-family:'Liberation Mono',monospace;">:</span>
<span class="t" style="left:1342.44px;top:497.17px;font-size:26.75px;color:#000;font-family:'Liberation Mono',monospace;"> Contents</span>
<span class="t" style="left:986.84px;top:529.21px;font-size:26.75px;color:#222;font-family:'Liberation Mono',monospace;">12</span>
<span class="t" style="left:1053.00px;top:529.21px;font-size:26.75px;color:#000080;font-family:'Liberation Mono',monospace;">        number-sections</span>
<span class="t" style="left:1422.84px;top:529.21px;font-size:26.75px;color:#687687;font-family:'Liberation Mono',monospace;">:</span>
<span class="t" style="left:1438.92px;top:529.21px;font-size:26.75px;color:#585cf6;font-family:'Liberation Mono',monospace;"> false</span>
<span class="t" style="left:986.84px;top:561.25px;font-size:26.75px;color:#222;font-family:'Liberation Mono',monospace;">13</span>
<span class="t" style="left:1053.00px;top:561.25px;font-size:26.75px;color:#000080;font-family:'Liberation Mono',monospace;">        code-line-numbers</span>
<span class="t" style="left:1455.00px;top:561.25px;font-size:26.75px;color:#687687;font-family:'Liberation Mono',monospace;">:</span>
<span class="t" style="left:1471.08px;top:561.25px;font-size:26.75px;color:#585cf6;font-family:'Liberation Mono',monospace;"> false</span>
<span class="t" style="left:986.84px;top:593.29px;font-size:26.75px;color:#222;font-family:'Liberation Mono',monospace;">14</span>
<span class="t" style="left:1053.00px;top:593.29px;font-size:26.75px;color:#000080;font-family:'Liberation Mono',monospace;">        code-copy</span>
<span class="t" style="left:1326.36px;top:593.29px;font-size:26.75px;color:#687687;font-family:'Liberation Mono',monospace;">:</span>
<span class="t" style="left:1342.44px;top:593.29px;font-size:26.75px;color:#000;font-family:'Liberation Mono',monospace;"> hover</span>
<span class="t" style="left:986.84px;top:625.33px;font-size:26.75px;color:#222;font-family:'Liberation Mono',monospace;">15</span>
<span class="t" style="left:1053.00px;top:625.33px;font-size:26.75px;color:#000080;font-family:'Liberation Mono',monospace;">lang</span>
<span class="t" style="left:1117.32px;top:625.33px;font-size:26.75px;color:#687687;font-family:'Liberation Mono',monospace;">:</span>
<span class="t" style="left:1133.40px;top:625.33px;font-size:26.75px;color:#000;font-family:'Liberation Mono',monospace;"> en</span>
<span class="t" style="left:986.84px;top:657.37px;font-size:26.75px;color:#222;font-family:'Liberation Mono',monospace;">16</span>
<span class="t" style="left:1053.00px;top:657.37px;font-size:26.75px;color:#000080;font-family:'Liberation Mono',monospace;">description</span>
<span class="t" style="left:1229.88px;top:657.37px;font-size:26.75px;color:#687687;font-family:'Liberation Mono',monospace;">:</span>
<span class="t" style="left:1245.96px;top:657.37px;font-size:26.75px;color:#000;font-family:'Liberation Mono',monospace;"> Sample size calculation for a continuous endpoint</span>
<span class="t" style="left:986.84px;top:689.41px;font-size:26.75px;color:#222;font-family:'Liberation Mono',monospace;">17</span>
<span class="t" style="left:1053.00px;top:689.41px;font-size:26.75px;color:#27365e;font-family:'Liberation Mono',monospace;">---</span>
<span class="t" style="left:986.84px;top:721.45px;font-size:26.75px;color:#222;font-family:'Liberation Mono',monospace;">18</span>
<span class="t" style="left:986.84px;top:753.49px;font-size:26.75px;color:#222;font-family:'Liberation Mono',monospace;">19</span>
<span class="t" style="left:1053.00px;top:753.49px;font-size:26.75px;color:#0000ff;font-family:'Liberation Mono',monospace;"># Working Environment</span>
<span class="t" style="left:986.84px;top:785.53px;font-size:26.75px;color:#222;font-family:'Liberation Mono',monospace;">20</span>
<span class="t" style="left:986.84px;top:817.57px;font-size:26.75px;color:#222;font-family:'Liberation Mono',monospace;">21</span>
<span class="t" style="left:1053.00px;top:817.57px;font-size:26.75px;color:#3b4670;font-family:'Liberation Mono',monospace;">```{r working_environment, include = TRUE, echo = TRUE, message = FALSE, warning = FALSE}</span>
<span class="t" style="left:986.84px;top:849.61px;font-size:26.75px;color:#222;font-family:'Liberation Mono',monospace;">22</span>
<span class="t" style="left:1053.00px;top:849.61px;font-size:26.75px;color:#4c8866;font-family:'Liberation Mono',monospace;"># Load the package `ggplot2`</span>
<span class="t" style="left:986.84px;top:881.65px;font-size:26.75px;color:#222;font-family:'Liberation Mono',monospace;">23</span>
<span class="t" style="left:1053.00px;top:881.65px;font-size:26.75px;color:#0000ff;font-family:'Liberation Mono',monospace;">library</span>
<span class="t" style="left:1165.56px;top:881.65px;font-size:26.75px;color:#687687;font-family:'Liberation Mono',monospace;">(</span>
<span class="t" style="left:1181.64px;top:881.65px;font-size:26.75px;color:#000;font-family:'Liberation Mono',monospace;">ggplot2</span>
<span class="t" style="left:1294.20px;top:881.65px;font-size:26.75px;color:#687687;font-family:'Liberation Mono',monospace;">)</span>
<span class="t" style="left:986.84px;top:913.69px;font-size:26.75px;color:#222;font-family:'Liberation Mono',monospace;">24</span>
<span class="t" style="left:986.84px;top:945.73px;font-size:26.75px;color:#222;font-family:'Liberation Mono',monospace;">25</span>
<span class="t" style="left:1053.00px;top:945.73px;font-size:26.75px;color:#4c8866;font-family:'Liberation Mono',monospace;"># Load the package `rpact`</span>
<span class="t" style="left:986.84px;top:977.77px;font-size:26.75px;color:#222;font-family:'Liberation Mono',monospace;">26</span>
<span class="t" style="left:1053.00px;top:977.77px;font-size:26.75px;color:#0000ff;font-family:'Liberation Mono',monospace;">library</span>
<span class="t" style="left:1165.56px;top:977.77px;font-size:26.75px;color:#687687;font-family:'Liberation Mono',monospace;">(</span>
<span class="t" style="left:1181.64px;top:977.77px;font-size:26.75px;color:#000;font-family:'Liberation Mono',monospace;">rpact</span>
<span class="t" style="left:1262.04px;top:977.77px;font-size:26.75px;color:#687687;font-family:'Liberation Mono',monospace;">)</span>
<span class="t" style="left:986.84px;top:1009.81px;font-size:26.75px;color:#222;font-family:'Liberation Mono',monospace;">27</span>
<span class="t" style="left:1053.00px;top:1009.81px;font-size:26.75px;color:#3b4670;font-family:'Liberation Mono',monospace;">```</span>
<span class="t" style="left:986.84px;top:1041.85px;font-size:26.75px;color:#222;font-family:'Liberation Mono',monospace;">28</span>
<span class="t" style="left:986.84px;top:1073.89px;font-size:26.75px;color:#222;font-family:'Liberation Mono',monospace;">29</span>
<span class="t" style="left:1053.00px;top:1073.89px;font-size:26.75px;color:#0000ff;font-family:'Liberation Mono',monospace;"># Design</span>
<span class="t" style="left:986.84px;top:1105.93px;font-size:26.75px;color:#222;font-family:'Liberation Mono',monospace;">30</span>
<span class="t" style="left:986.84px;top:1137.97px;font-size:26.75px;color:#222;font-family:'Liberation Mono',monospace;">31</span>
<span class="t" style="left:1053.00px;top:1137.97px;font-size:26.75px;color:#3b4670;font-family:'Liberation Mono',monospace;">```{r create_designPlan, message = FALSE, warning = TRUE, include = TRUE, echo = TRUE}</span>
<span class="t" style="left:986.84px;top:1170.01px;font-size:26.75px;color:#222;font-family:'Liberation Mono',monospace;">32</span>
<span class="t" style="left:1053.00px;top:1170.01px;font-size:26.75px;color:#000;font-family:'Liberation Mono',monospace;">getDesignInverseNormal</span>
<span class="t" style="left:1406.76px;top:1170.01px;font-size:26.75px;color:#687687;font-family:'Liberation Mono',monospace;">(</span>
<span class="t" style="left:1422.84px;top:1170.01px;font-size:26.75px;color:#000;font-family:'Liberation Mono',monospace;">kMax </span>
<span class="t" style="left:1503.24px;top:1170.01px;font-size:26.75px;color:#687687;font-family:'Liberation Mono',monospace;">=</span>
<span class="t" style="left:1519.32px;top:1170.01px;font-size:26.75px;color:#000;font-family:'Liberation Mono',monospace;"> </span>
<span class="t" style="left:1535.40px;top:1170.01px;font-size:26.75px;color:#0000cd;font-family:'Liberation Mono',monospace;">2</span>
<span class="t" style="left:1551.48px;top:1170.01px;font-size:26.75px;color:#687687;font-family:'Liberation Mono',monospace;">)</span>
<span class="t" style="left:1567.56px;top:1170.01px;font-size:26.75px;color:#000;font-family:'Liberation Mono',monospace;"> </span>
<span class="t" style="left:1583.64px;top:1170.01px;font-size:26.75px;color:#687687;font-family:'Liberation Mono',monospace;">|&gt;</span>
<span class="t" style="left:986.84px;top:1202.05px;font-size:26.75px;color:#222;font-family:'Liberation Mono',monospace;">33</span>
<span class="t" style="left:1053.00px;top:1202.05px;font-size:26.75px;color:#000;font-family:'Liberation Mono',monospace;">  getSampleSizeMeans</span>
<span class="t" style="left:1374.60px;top:1202.05px;font-size:26.75px;color:#687687;font-family:'Liberation Mono',monospace;">(</span>
<span class="t" style="left:1390.68px;top:1202.05px;font-size:26.75px;color:#000;font-family:'Liberation Mono',monospace;">alternative </span>
<span class="t" style="left:1583.64px;top:1202.05px;font-size:26.75px;color:#687687;font-family:'Liberation Mono',monospace;">=</span>
<span class="t" style="left:1599.72px;top:1202.05px;font-size:26.75px;color:#000;font-family:'Liberation Mono',monospace;"> c</span>
<span class="t" style="left:1631.88px;top:1202.05px;font-size:26.75px;color:#687687;font-family:'Liberation Mono',monospace;">(</span>
<span class="t" style="left:1647.96px;top:1202.05px;font-size:26.75px;color:#0000cd;font-family:'Liberation Mono',monospace;">0.3</span>
<span class="t" style="left:1696.20px;top:1202.05px;font-size:26.75px;color:#000;font-family:'Liberation Mono',monospace;">, </span>
<span class="t" style="left:1728.36px;top:1202.05px;font-size:26.75px;color:#0000cd;font-family:'Liberation Mono',monospace;">0.5</span>
<span class="t" style="left:1776.60px;top:1202.05px;font-size:26.75px;color:#687687;font-family:'Liberation Mono',monospace;">)</span>
<span class="t" style="left:1792.68px;top:1202.05px;font-size:26.75px;color:#000;font-family:'Liberation Mono',monospace;">, stDev </span>
<span class="t" style="left:1921.32px;top:1202.05px;font-size:26.75px;color:#687687;font-family:'Liberation Mono',monospace;">=</span>
<span class="t" style="left:1937.40px;top:1202.05px;font-size:26.75px;color:#000;font-family:'Liberation Mono',monospace;"> </span>
<span class="t" style="left:1953.48px;top:1202.05px;font-size:26.75px;color:#0000cd;font-family:'Liberation Mono',monospace;">0.8</span>
<span class="t" style="left:2001.72px;top:1202.05px;font-size:26.75px;color:#687687;font-family:'Liberation Mono',monospace;">)</span>
<span class="t" style="left:2017.80px;top:1202.05px;font-size:26.75px;color:#000;font-family:'Liberation Mono',monospace;"> </span>
<span class="t" style="left:2033.88px;top:1202.05px;font-size:26.75px;color:#687687;font-family:'Liberation Mono',monospace;">|&gt;</span>
<span class="t" style="left:986.84px;top:1234.09px;font-size:26.75px;color:#222;font-family:'Liberation Mono',monospace;">34</span>
<span class="t" style="left:1053.00px;top:1234.09px;font-size:26.75px;color:#000;font-family:'Liberation Mono',monospace;">  summary</span>
<span class="t" style="left:1197.72px;top:1234.09px;font-size:26.75px;color:#687687;font-family:'Liberation Mono',monospace;">()</span>
<span class="t" style="left:1229.88px;top:1234.09px;font-size:26.75px;color:#000;font-family:'Liberation Mono',monospace;"> </span>
<span class="t" style="left:1245.96px;top:1234.09px;font-size:26.75px;color:#687687;font-family:'Liberation Mono',monospace;">|&gt;</span>
<span class="t" style="left:986.84px;top:1266.13px;font-size:26.75px;color:#222;font-family:'Liberation Mono',monospace;">35</span>
<span class="t" style="left:1053.00px;top:1266.13px;font-size:26.75px;color:#000;font-family:'Liberation Mono',monospace;">  plot</span>
<span class="t" style="left:1149.48px;top:1266.13px;font-size:26.75px;color:#687687;font-family:'Liberation Mono',monospace;">(</span>
<span class="t" style="left:1165.56px;top:1266.13px;font-size:26.75px;color:#000;font-family:'Liberation Mono',monospace;">type </span>
<span class="t" style="left:1245.96px;top:1266.13px;font-size:26.75px;color:#687687;font-family:'Liberation Mono',monospace;">=</span>
<span class="t" style="left:1262.04px;top:1266.13px;font-size:26.75px;color:#000;font-family:'Liberation Mono',monospace;"> </span>
<span class="t" style="left:1278.12px;top:1266.13px;font-size:26.75px;color:#0000cd;font-family:'Liberation Mono',monospace;">5</span>
<span class="t" style="left:1294.20px;top:1266.13px;font-size:26.75px;color:#000;font-family:'Liberation Mono',monospace;">, legendPosition </span>
<span class="t" style="left:1567.56px;top:1266.13px;font-size:26.75px;color:#687687;font-family:'Liberation Mono',monospace;">=</span>
<span class="t" style="left:1583.64px;top:1266.13px;font-size:26.75px;color:#000;font-family:'Liberation Mono',monospace;"> </span>
<span class="t" style="left:1599.72px;top:1266.13px;font-size:26.75px;color:#036a07;font-family:'Liberation Mono',monospace;">&#x27;bottom&#x27;</span>
<span class="t" style="left:1728.36px;top:1266.13px;font-size:26.75px;color:#687687;font-family:'Liberation Mono',monospace;">)</span>
<span class="t" style="left:986.84px;top:1298.17px;font-size:26.75px;color:#222;font-family:'Liberation Mono',monospace;">36</span>
<span class="t" style="left:1053.00px;top:1298.17px;font-size:26.75px;color:#3b4670;font-family:'Liberation Mono',monospace;">```</span>
<span class="t" style="left:986.84px;top:1330.21px;font-size:26.75px;color:#222;font-family:'Liberation Mono',monospace;">37</span>
<span class="t" style="left:986.84px;top:1362.25px;font-size:26.75px;color:#222;font-family:'Liberation Mono',monospace;">38</span>
<span class="t" style="left:986.84px;top:1394.29px;font-size:26.75px;color:#222;font-family:'Liberation Mono',monospace;">39</span>
<span class="t" style="left:1053.00px;top:1394.29px;font-size:26.75px;color:#c00;font-family:'Liberation Mono',monospace;">***</span>
<span class="t" style="left:986.84px;top:1426.33px;font-size:26.75px;color:#222;font-family:'Liberation Mono',monospace;">40</span>
<span class="t" style="left:986.84px;top:1458.37px;font-size:26.75px;color:#222;font-family:'Liberation Mono',monospace;">41</span>
<span class="t" style="left:986.84px;top:1490.41px;font-size:26.75px;color:#222;font-family:'Liberation Mono',monospace;">42</span>
<span class="t" style="left:1053.00px;top:1490.41px;font-size:26.75px;color:#000;font-family:'Liberation Mono',monospace;">System: rpact </span>
<span class="t" style="left:1278.12px;top:1490.41px;font-size:26.75px;color:#3b4670;font-family:'Liberation Mono',monospace;">`r  packageVersion(&quot;rpact&quot;)`</span>
<span class="t" style="left:1728.36px;top:1490.41px;font-size:26.75px;color:#000;font-family:'Liberation Mono',monospace;">, </span>
<span class="t" style="left:1760.52px;top:1490.41px;font-size:26.75px;color:#3b4670;font-family:'Liberation Mono',monospace;">`r R.version.string`</span>
<span class="t" style="left:2082.12px;top:1490.41px;font-size:26.75px;color:#000;font-family:'Liberation Mono',monospace;">, platform: </span>
<span class="t" style="left:2275.08px;top:1490.41px;font-size:26.75px;color:#3b4670;font-family:'Liberation Mono',monospace;">`r R.version$platform`</span>
<span class="t" style="left:986.84px;top:1522.45px;font-size:26.75px;color:#222;font-family:'Liberation Mono',monospace;">43</span>
<span class="t" style="left:986.84px;top:1554.49px;font-size:26.75px;color:#222;font-family:'Liberation Mono',monospace;">44</span>
<span class="t" style="left:1053.00px;top:1554.49px;font-size:26.75px;color:#3b4670;font-family:'Liberation Mono',monospace;">```{r, include = TRUE, echo = FALSE, message = FALSE, warning = FALSE}</span>
<span class="t" style="left:986.84px;top:1586.53px;font-size:26.75px;color:#222;font-family:'Liberation Mono',monospace;">45</span>
<span class="t" style="left:1053.00px;top:1586.53px;font-size:26.75px;color:#000;font-family:'Liberation Mono',monospace;">printCitation</span>
<span class="t" style="left:1262.04px;top:1586.53px;font-size:26.75px;color:#687687;font-family:'Liberation Mono',monospace;">()</span>
<span class="t" style="left:986.84px;top:1618.57px;font-size:26.75px;color:#222;font-family:'Liberation Mono',monospace;">46</span>
<span class="t" style="left:1053.00px;top:1618.57px;font-size:26.75px;color:#3b4670;font-family:'Liberation Mono',monospace;">```</span>
<span class="t" style="left:986.84px;top:1650.61px;font-size:26.75px;color:#222;font-family:'Liberation Mono',monospace;">47</span>
<span class="t" style="left:986.84px;top:1682.65px;font-size:26.75px;color:#222;font-family:'Liberation Mono',monospace;">48</span>
</div>
<div class="a" style="left:1054.00px;top:718.50px;width:2.30px;height:31.00px;background:#999;z-index:12;"></div>
<svg style="left:0;top:0;z-index:12" width="3193" height="1893">
<defs>
<radialGradient id="mg" cx="40%" cy="35%" r="70%"><stop offset="0" stop-color="#f4f9ff"/><stop offset="1" stop-color="#a9cdf0"/></radialGradient>
<linearGradient id="sep" x1="0" y1="0" x2="0" y2="1"><stop offset="0" stop-color="#c5cace" stop-opacity="0"/><stop offset=".2" stop-color="#c5cace"/><stop offset=".8" stop-color="#c5cace"/><stop offset="1" stop-color="#c5cace" stop-opacity="0"/></linearGradient>
<path id="gearp" d="M-1.95 -9.81 L-1.76 -13.08 A13.2 13.2 0 0 1 1.76 -13.08 L1.95 -9.81 A10.0 10.0 0 0 1 5.56 -8.31 L5.56 -8.31 L8.01 -10.49 A13.2 13.2 0 0 1 10.49 -8.01 L8.31 -5.56 A10.0 10.0 0 0 1 9.81 -1.95 L9.81 -1.95 L13.08 -1.76 A13.2 13.2 0 0 1 13.08 1.76 L9.81 1.95 A10.0 10.0 0 0 1 8.31 5.56 L8.31 5.56 L10.49 8.01 A13.2 13.2 0 0 1 8.01 10.49 L5.56 8.31 A10.0 10.0 0 0 1 1.95 9.81 L1.95 9.81 L1.76 13.08 A13.2 13.2 0 0 1 -1.76 13.08 L-1.95 9.81 A10.0 10.0 0 0 1 -5.56 8.31 L-5.56 8.31 L-8.01 10.49 A13.2 13.2 0 0 1 -10.49 8.01 L-8.31 5.56 A10.0 10.0 0 0 1 -9.81 1.95 L-9.81 1.95 L-13.08 1.76 A13.2 13.2 0 0 1 -13.08 -1.76 L-9.81 -1.95 A10.0 10.0 0 0 1 -8.31 -5.56 L-8.31 -5.56 L-10.49 -8.01 A13.2 13.2 0 0 1 -8.01 -10.49 L-5.56 -8.31 A10.0 10.0 0 0 1 -1.95 -9.81 Z"/>
<filter id="wsh" x="-50%" y="-50%" width="200%" height="200%"><feDropShadow dx="0" dy="1" stdDeviation="1.2" flood-opacity=".35"/></filter>
</defs>
<!-- tab doc icon -->
<path d="M967.5 42.2 H982.5 L992.5 52.2 V71.4 H967.5 Z" fill="#fff" stroke="#8a8a8a" stroke-width="1.2"/>
<path d="M982.5 42.2 V52.2 H992.5" fill="#fff" stroke="#8a8a8a" stroke-width="1.2"/>
<circle cx="971.4" cy="57.5" r="8.6" fill="#6fa5d8"/>
<path d="M971.4 48.9 V66.1 M962.8 57.5 H980" stroke="#fff" stroke-width="1.3"/>
<!-- close x -->
<path d="M1289 53.5 L1301 65.5 M1301 53.5 L1289 65.5" stroke="#c4c7ca" stroke-width="3.2"/>
<!-- min / restore -->
<rect x="2601.5" y="63" width="27" height="10" rx="2.5" fill="none" stroke="#8d969c" stroke-width="2.4"/>
<rect x="2601.5" y="68" width="27" height="5" fill="#8d969c"/>
<rect x="2644" y="49.5" width="20" height="16" rx="2" fill="none" stroke="#8d969c" stroke-width="2.4"/>
<rect x="2637" y="56.5" width="20" height="17" rx="2" fill="#e6e8eb" stroke="#8d969c" stroke-width="2.4"/>
<!-- separators -->
<g fill="url(#sep)">
<rect x="1041.5" y="87" width="2" height="31"/><rect x="1103" y="87" width="2" height="31"/>
<rect x="1372" y="87" width="2" height="31"/><rect x="1482" y="87" width="2" height="31"/>
<rect x="2262.5" y="87" width="2" height="31"/><rect x="2371.5" y="87" width="2" height="31"/>
<rect x="2508" y="87" width="2" height="31"/>
</g>
<!-- back / fwd arrows -->
<path d="M963.5 106.8 L977.4 95 V100.4 H991.6 V113.7 H977.4 V118.6 Z" fill="#eeeff1" stroke="#6f6f6f" stroke-width="1.3" stroke-linejoin="round"/>
<path d="M1026 106.8 L1012.1 95 V100.4 H997.9 V113.7 H1012.1 V118.6 Z" fill="#f1f3f5" stroke="#d0d4d7" stroke-width="1.3" stroke-linejoin="round"/>
<!-- open in new window -->
<rect x="1066.4" y="95.2" width="21.4" height="21.6" rx="3" fill="#f8f9fb" stroke="#7d8f9d" stroke-width="1.2"/>
<path d="M1066.4 101.6 V98.2 a3 3 0 0 1 3 -3 H1084.8 a3 3 0 0 1 3 3 V101.6 Z" fill="#cfe5f8"/>
<path d="M1058.6 111.5 L1065.5 104.6 L1063 102.6 L1071.6 102.6 L1071.6 111.2 L1069.3 108.7 L1062.3 115.5 Z" fill="#d9dbde" stroke="#6f7b85" stroke-width="1.1" stroke-linejoin="round"/>
<!-- save -->
<rect x="1123.5" y="94.4" width="25.2" height="25.2" rx="2.5" fill="#cfe0ef"/>
<rect x="1127" y="94.4" width="17.7" height="11.4" fill="#fff"/>
<rect x="1129" y="110" width="13" height="9.6" fill="#fff"/>
<rect x="1131" y="112.2" width="4" height="7.4" fill="#cfe0ef"/>
<!-- checkbox -->
<rect x="1172.6" y="93.6" width="22.4" height="22.8" rx="4.5" fill="#fff" stroke="#a0a0a0" stroke-width="2.4"/>
<!-- ABC check -->
<text x="1388" y="101.6" font-family="Liberation Serif" font-weight="700" font-size="15" fill="#aab0b8" textLength="34" lengthAdjust="spacingAndGlyphs">ABC</text>
<path d="M1398.5 113 L1403.4 118.5 L1415 105.5" fill="none" stroke="#119c2b" stroke-width="3.4" stroke-linejoin="round"/>
<!-- magnifier -->
<path d="M1457 108.4 L1466.5 118" stroke="#8a5a2b" stroke-width="4.2" stroke-linecap="round"/>
<circle cx="1450" cy="101.6" r="8.6" fill="url(#mg)" stroke="#7d8f9d" stroke-width="2"/>
<!-- render icon -->
<g fill="#6fa5d8">
<rect x="1496" y="100" width="6.5" height="5.8" rx="1.2"/><rect x="1504" y="100" width="6.8" height="5.8"/>
<rect x="1496" y="107" width="6.5" height="5.8" rx="1.2"/><rect x="1504" y="107" width="6.8" height="5.8"/>
<path d="M1512 94 L1525.6 106.4 L1512 118.8 Z"/>
</g>
<path d="M1639.9 105 H1650 L1645 110 Z" fill="#a9aeb1"/>
<path d="M1715.9 105 H1726 L1721 110 Z" fill="#111"/>
<path d="M2244 105 H2254 L2249 110 Z" fill="#111"/>
<path d="M2482 105 H2492 L2487 110 Z" fill="#111"/>
<path d="M2656.7 105 H2667 L2661.8 110 Z" fill="#111"/>
<!-- chunk insert -->
<rect x="2208.2" y="94.2" width="22.5" height="24.5" rx="4" fill="#6cb86a" stroke="#4c8a4a" stroke-width="1"/>
<text x="2212" y="115" font-family="Liberation Serif" font-size="19" fill="#fff">C</text>
<circle cx="2203.8" cy="97.8" r="7.9" fill="#fff" filter="url(#wsh)"/>
<path d="M2203.9 92 V103.6 M2198 97.8 H2209.8" stroke="#1cb01c" stroke-width="3.6"/>
<!-- up / down arrows -->
<path d="M2295.8 93.2 L2307.3 105 H2300.5 V118.7 H2291.5 V105 H2284.6 Z" fill="#fff" stroke="#9ea3a7" stroke-width="1.1" stroke-linejoin="round"/>
<path d="M2344 119.4 L2355.5 108.3 H2348.7 V94.2 H2339.7 V108.3 H2332.5 Z" fill="#fff" stroke="#9ea3a7" stroke-width="1.1" stroke-linejoin="round"/>
<!-- run -->
<rect x="2389.4" y="93.2" width="21.2" height="23.6" rx="3" fill="#fff" stroke="#c8c8c8" stroke-width="1.1"/>
<rect x="2392" y="102.2" width="13" height="5.5" fill="#a8ccf5"/>
<path d="M2407 102.4 H2416 V96.4 L2425.7 105.2 L2416 114 V107.7 H2407 Z" fill="#16a352"/>
<!-- publish -->
<g fill="none" stroke="#1a9be6" stroke-width="3.6">
<path d="M2526 105.5 H2531.5 A10.5 10.5 0 0 1 2548.5 98.5"/>
<path d="M2558 107.5 H2552 A10.5 10.5 0 0 1 2535 114.2"/>
</g>
<circle cx="2541.6" cy="106" r="4.6" fill="#1a9be6"/>
<!-- gear -->
<g transform="translate(1686.2,105.5)">
<path d="M-1.95 -9.81 L-1.76 -13.08 A13.2 13.2 0 0 1 1.76 -13.08 L1.95 -9.81 A10.0 10.0 0 0 1 5.56 -8.31 L5.56 -8.31 L8.01 -10.49 A13.2 13.2 0 0 1 10.49 -8.01 L8.31 -5.56 A10.0 10.0 0 0 1 9.81 -1.95 L9.81 -1.95 L13.08 -1.76 A13.2 13.2 0 0 1 13.08 1.76 L9.81 1.95 A10.0 10.0 0 0 1 8.31 5.56 L8.31 5.56 L10.49 8.01 A13.2 13.2 0 0 1 8.01 10.49 L5.56 8.31 A10.0 10.0 0 0 1 1.95 9.81 L1.95 9.81 L1.76 13.08 A13.2 13.2 0 0 1 -1.76 13.08 L-1.95 9.81 A10.0 10.0 0 0 1 -5.56 8.31 L-5.56 8.31 L-8.01 10.49 A13.2 13.2 0 0 1 -10.49 8.01 L-8.31 5.56 A10.0 10.0 0 0 1 -9.81 1.95 L-9.81 1.95 L-13.08 1.76 A13.2 13.2 0 0 1 -13.08 -1.76 L-9.81 -1.95 A10.0 10.0 0 0 1 -8.31 -5.56 L-8.31 -5.56 L-10.49 -8.01 A13.2 13.2 0 0 1 -8.01 -10.49 L-5.56 -8.31 A10.0 10.0 0 0 1 -1.95 -9.81 Z" fill="#fff" stroke="#9aa0a4" stroke-width="1.3" stroke-linejoin="round"/>
<circle r="3.6" fill="none" stroke="#9aa0a4" stroke-width="1.3"/>
</g>
<!-- outline icon -->
<g stroke="#777" stroke-width="1.6">
<line x1="2551" y1="141" x2="2573" y2="141"/><line x1="2555" y1="146.5" x2="2573" y2="146.5"/>
<line x1="2555" y1="152" x2="2573" y2="152"/><line x1="2551" y1="157.5" x2="2573" y2="157.5"/>
</g>
</svg>
<svg style="left:0;top:0;z-index:12" width="3193" height="1893">
<path d="M1026.8 186.9 H1036.8 L1031.8 193.1 Z" fill="#777"/>
<path d="M1026.8 763.6 H1036.8 L1031.8 769.8 Z" fill="#777"/>
<path d="M1026.8 827.7 H1036.8 L1031.8 833.9 Z" fill="#777"/>
<path d="M1026.8 1084.0 H1036.8 L1031.8 1090.2 Z" fill="#777"/>
<path d="M1026.8 1148.1 H1036.8 L1031.8 1154.3 Z" fill="#777"/>
<path d="M1026.8 1564.6 H1036.8 L1031.8 1570.8 Z" fill="#777"/>
<path d="M1026.8 704.0 H1036.8 L1031.8 697.8 Z" fill="#777"/>
<path d="M1026.8 1024.4 H1036.8 L1031.8 1018.2 Z" fill="#777"/>
<path d="M1026.8 1312.8 H1036.8 L1031.8 1306.6 Z" fill="#777"/>
<path d="M1026.8 1633.2 H1036.8 L1031.8 1627.0 Z" fill="#777"/>
<g transform="translate(2551.7,830.2) scale(0.93)"><use href="#gearp" fill="#fdfdfd" stroke="#c5c9cc" stroke-width="1.3" stroke-linejoin="round"/><circle r="3.6" fill="none" stroke="#c3c7ca" stroke-width="1.3"/></g>
<path d="M2584 821.2 H2604 L2594 830.7 Z" fill="#b4b8bb"/>
<rect x="2585" y="833.2" width="18" height="6" fill="#45c26a"/>
<path d="M2633.5 821.2 L2642.5 830.2 L2633.5 839.2 Z" fill="#10a048"/>
<g transform="translate(2551.7,1150.6) scale(0.93)"><use href="#gearp" fill="#fdfdfd" stroke="#c5c9cc" stroke-width="1.3" stroke-linejoin="round"/><circle r="3.6" fill="none" stroke="#c3c7ca" stroke-width="1.3"/></g>
<path d="M2584 1141.6 H2604 L2594 1151.1 Z" fill="#b4b8bb"/>
<rect x="2585" y="1153.6" width="18" height="6" fill="#45c26a"/>
<path d="M2633.5 1141.6 L2642.5 1150.6 L2633.5 1159.6 Z" fill="#10a048"/>
<g transform="translate(2551.7,1567.1) scale(0.93)"><use href="#gearp" fill="#fdfdfd" stroke="#c5c9cc" stroke-width="1.3" stroke-linejoin="round"/><circle r="3.6" fill="none" stroke="#c3c7ca" stroke-width="1.3"/></g>
<path d="M2584 1558.1 H2604 L2594 1567.6 Z" fill="#b4b8bb"/>
<rect x="2585" y="1570.1" width="18" height="6" fill="#45c26a"/>
<path d="M2633.5 1558.1 L2642.5 1567.1 L2633.5 1576.1 Z" fill="#10a048"/>
<path d="M1374.0 971.9 L1377.0 969.7 L1380.0 971.9 L1383.0 969.7 L1386.0 971.9 L1389.0 969.7 L1392.0 971.9 L1395.0 969.7 L1398.0 971.9 L1401.0 969.7 L1404.0 971.9 L1407.0 969.7 L1410.0 971.9 L1413.0 969.7 L1416.0 971.9 L1419.0 969.7 L1422.0 971.9 L1425.0 969.7 L1428.0 971.9 L1431.0 969.7 L1434.0 971.9 L1437.0 969.7 L1440.0 971.9 L1443.0 969.7 L1446.0 971.9 L1449.0 969.7 L1452.0 971.9 L1455.0 969.7" fill="none" stroke="#e3a33a" stroke-width="1.1"/>
<path d="M1181.4 1516.5 L1184.4 1514.3 L1187.4 1516.5 L1190.4 1514.3 L1193.4 1516.5 L1196.4 1514.3 L1199.4 1516.5 L1202.4 1514.3 L1205.4 1516.5 L1208.4 1514.3 L1211.4 1516.5 L1214.4 1514.3 L1217.4 1516.5 L1220.4 1514.3 L1223.4 1516.5 L1226.4 1514.3 L1229.4 1516.5 L1232.4 1514.3 L1235.4 1516.5 L1238.4 1514.3 L1241.4 1516.5 L1244.4 1514.3 L1247.4 1516.5 L1250.4 1514.3 L1253.4 1516.5 L1256.4 1514.3 L1259.4 1516.5 L1262.4 1514.3" fill="none" stroke="#e3a33a" stroke-width="1.1"/>
<path d="M1077.9 1732.7 L1089 1743.8 L1077.9 1755 L1066.8 1743.8 Z" fill="#7ec8e3" stroke="#5aa9c9" stroke-width="1"/>
<path d="M1214.8 1741 L1220.4 1735 L1226.0 1741 Z M1214.8 1745 L1220.4 1751 L1226.0 1745 Z" fill="#555"/>
<path d="M2660.6 1741 L2666.2 1735 L2671.8 1741 Z M2660.6 1745 L2666.2 1751 L2671.8 1745 Z" fill="#555"/>
</svg>
</body></html>
